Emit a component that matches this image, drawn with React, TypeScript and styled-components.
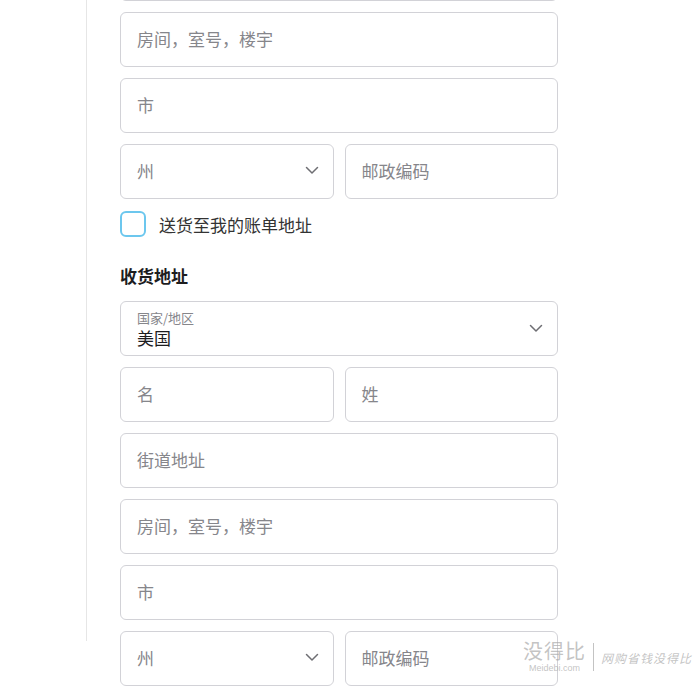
import React from "react";
import styled, { createGlobalStyle } from "styled-components";

const Global = createGlobalStyle`
  html, body { margin: 0; padding: 0; background: #fff; }
  body { font-family: "Noto Sans CJK SC", "Noto Sans", sans-serif; overflow: hidden; }
`;

const Page = styled.div`
  position: relative;
  width: 700px;
  height: 695px;
  overflow: hidden;
  padding-left: 86px;
  box-sizing: border-box;
`;

const Column = styled.div`
  border-left: 1px solid #e6e6e6;
  height: 100%;
  padding-left: 33px;
  box-sizing: border-box;
`;

const Form = styled.div`
  width: 438px;
  margin-top: -54px;
  display: flex;
  flex-direction: column;
  gap: 11px;
`;

const Row = styled.div`
  display: grid;
  grid-template-columns: 1fr 1fr;
  gap: 11px;
`;

const Field = styled.div<{ $stacked?: boolean }>`
  position: relative;
  height: 55px;
  box-sizing: border-box;
  border: 1px solid #d2d2d7;
  border-radius: 6px;
  display: flex;
  align-items: center;
  padding: 0 16px ${(p) => (p.$stacked ? "0" : "3px")};
  font-size: 17px;
  color: #86868b;
  background: #fff;
`;

const SelectField = styled(Field)`
  justify-content: space-between;
  padding-right: 14px;
`;

const Stacked = styled.div`
  display: flex;
  flex-direction: column;
`;

const SmallLabel = styled.span`
  font-size: 13px;
  line-height: 15px;
  color: #86868b;
`;

const Value = styled.span`
  font-size: 17px;
  line-height: 20px;
  color: #1d1d1f;
  margin-top: 3px;
`;

const CheckRow = styled.label`
  display: flex;
  align-items: center;
  gap: 13px;
  margin-top: 1px;
  font-size: 17px;
  color: #333;
`;

const Box = styled.span`
  width: 26px;
  height: 26px;
  box-sizing: border-box;
  border: 2px solid #6cc7ee;
  border-radius: 6px;
`;

const Heading = styled.h3`
  margin: 16px 0 2px;
  font-size: 17px;
  font-weight: 700;
  color: #1d1d1f;
  line-height: 24px;
`;

const Watermark = styled.div`
  position: absolute;
  right: 8px;
  bottom: 22px;
  display: flex;
  align-items: center;
  gap: 7px;
  color: rgba(170, 170, 170, 0.7);
  pointer-events: none;
`;

const Brand = styled.div`
  display: flex;
  flex-direction: column;
  align-items: center;
  line-height: 1;
`;

const BrandName = styled.span`
  font-size: 20px;
  letter-spacing: 1px;
`;

const BrandUrl = styled.span`
  font-family: "Liberation Sans", sans-serif;
  font-size: 9px;
  margin-top: 3px;
`;

const Divider = styled.span`
  width: 1px;
  height: 28px;
  background: rgba(170, 170, 170, 0.7);
`;

const Slogan = styled.span`
  font-size: 12px;
  letter-spacing: 1px;
  font-style: italic;
`;

const Chevron = () => (
  <svg width="14" height="9" viewBox="0 0 14 9" fill="none">
    <path d="M1.5 1.5 L7 7 L12.5 1.5" stroke="#6e6e73" strokeWidth="1.5" strokeLinecap="round" strokeLinejoin="round" />
  </svg>
);

const StateZip = () => (
  <Row>
    <SelectField>
      <span>州</span>
      <Chevron />
    </SelectField>
    <Field>邮政编码</Field>
  </Row>
);

export default function App() {
  return (
    <>
      <Global />
      <Page>
        <Column>
          <Form>
            <Field />
            <Field>房间，室号，楼宇</Field>
            <Field>市</Field>
            <StateZip />
            <CheckRow>
              <Box />
              送货至我的账单地址
            </CheckRow>
            <Heading>收货地址</Heading>
            <SelectField $stacked>
              <Stacked>
                <SmallLabel>国家/地区</SmallLabel>
                <Value>美国</Value>
              </Stacked>
              <Chevron />
            </SelectField>
            <Row>
              <Field>名</Field>
              <Field>姓</Field>
            </Row>
            <Field>街道地址</Field>
            <Field>房间，室号，楼宇</Field>
            <Field>市</Field>
            <StateZip />
          </Form>
        </Column>
        <Watermark>
          <Brand>
            <BrandName>没得比</BrandName>
            <BrandUrl>Meidebi.com</BrandUrl>
          </Brand>
          <Divider />
          <Slogan>网购省钱没得比</Slogan>
        </Watermark>
      </Page>
    </>
  );
}
